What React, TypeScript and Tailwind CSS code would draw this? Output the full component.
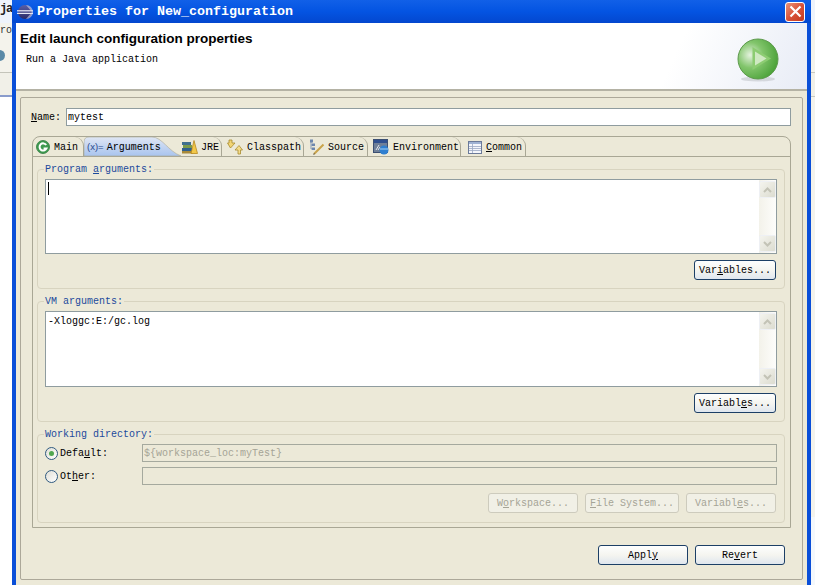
import React from 'react'

const mono = "font-['Liberation_Mono','DejaVu_Sans_Mono',monospace]"

const Scrollbar = () => (
  <div className="flex w-[17px] shrink-0 flex-col justify-between bg-gradient-to-r from-[#f3f2ea] to-[#fdfdfb] py-px">
    <ScrollArrow up />
    <ScrollArrow />
  </div>
)

const ScrollArrow = ({ up = false }: { up?: boolean }) => (
  <div className="flex h-[17px] w-[17px] items-center justify-center rounded-[2px] border border-[#eef0f4] bg-gradient-to-br from-[#f4f4ee] to-[#dcdcd0]">
    <svg width="9" height="6" viewBox="0 0 9 6">
      <path d={up ? 'M1 5 L4.5 1.5 L8 5' : 'M1 1 L4.5 4.5 L8 1'} fill="none" stroke="#c3c3b6" strokeWidth="2" />
    </svg>
  </div>
)

const XpButton = ({ className, children }: { className: string; children: React.ReactNode }) => (
  <button
    type="button"
    className={`flex h-[20px] items-center justify-center rounded-[3px] border border-[#1c3f66] bg-gradient-to-b from-[#fdfefe] via-[#f5f5f0] to-[#dfe6ee] pt-px text-[10px] leading-none text-black ${className}`}
  >
    {children}
  </button>
)

const DisabledButton = ({ className, children }: { className: string; children: React.ReactNode }) => (
  <button
    type="button"
    className={`flex h-[20px] items-center justify-center rounded-[3px] border border-[#cdcbbd] bg-[#f1f0e6] pt-px text-[10px] leading-none text-[#a5a496] ${className}`}
  >
    {children}
  </button>
)

const Group = ({ label, className, children }: { label: React.ReactNode; className: string; children: React.ReactNode }) => (
  <fieldset className={`ml-[4px] mr-[5px] rounded-[4px] border border-[#d8d4c0] px-[7px] ${className}`}>
    <legend className="ml-[-1px] px-[1px] text-[10px] leading-[11px] text-[#1c4a9c]">{label}</legend>
    {children}
  </fieldset>
)

const ArgBox = ({ className, children }: { className: string; children?: React.ReactNode }) => (
  <div className={`flex border border-[#8f9c9f] bg-white ${className}`}>
    <div className="flex-1 px-[2px] pt-[2px] text-[10px] leading-[12px] text-black">{children}</div>
    <Scrollbar />
  </div>
)

const Tab = ({ className, icon, children }: { className: string; icon: React.ReactNode; children: React.ReactNode }) => (
  <div className={`flex h-[19px] items-center rounded-tr-[9px] border-r border-[#a9a795] pt-px text-[10px] text-black ${className}`}>
    {icon}
    {children}
  </div>
)

const EclipseIcon = () => (
  <svg width="16" height="16" viewBox="0 0 16 16" className="shrink-0">
    <defs>
      <linearGradient id="ecl" x1="0" y1="0" x2="0" y2="1">
        <stop offset="0" stopColor="#5a5fa8" />
        <stop offset="1" stopColor="#2c2a66" />
      </linearGradient>
    </defs>
    <circle cx="8" cy="8" r="7" fill="url(#ecl)" />
    <rect x="0" y="6.2" width="16" height="1.2" fill="#e8e8f4" />
    <rect x="0" y="8.8" width="16" height="1.2" fill="#e8e8f4" />
    <path d="M9 1 A7 7 0 0 1 9 15 L15 8 Z" fill="#dcdcec" opacity="0.55" />
  </svg>
)

const PlayBadge = () => (
  <svg width="42" height="46" viewBox="0 0 42 46">
    <defs>
      <radialGradient id="ball" cx="0.3" cy="0.4" r="0.8">
        <stop offset="0" stopColor="#e4f2de" />
        <stop offset="0.4" stopColor="#82c56c" />
        <stop offset="1" stopColor="#3f9a2e" />
      </radialGradient>
    </defs>
    <ellipse cx="21" cy="41" rx="17" ry="2.5" fill="#c9ccd2" opacity="0.7" />
    <circle cx="21" cy="21" r="20" fill="url(#ball)" stroke="#5d9a4c" strokeWidth="1" />
    <path d="M15.5 9 L34 20.5 L15.5 32 Z" fill="#8ccc72" />
    <path d="M18 13.5 L29.5 20.5 L18 27.5 Z" fill="#cfe9c2" />
  </svg>
)

const CloseButton = () => (
  <div className="flex h-[20px] w-[20px] items-center justify-center rounded-[3px] border border-white bg-gradient-to-br from-[#e8927a] via-[#d9533a] to-[#c23a1e]">
    <svg width="13" height="13" viewBox="0 0 13 13">
      <path d="M1.5 1.5 L11.5 11.5 M11.5 1.5 L1.5 11.5" stroke="#fff" strokeWidth="2.2" />
    </svg>
  </div>
)

const MainIcon = () => (
  <svg width="14" height="14" viewBox="0 0 14 14" className="mr-[4px] ml-[3px] shrink-0">
    <circle cx="7" cy="7" r="6.5" fill="#3f9a50" stroke="#2f7b40" strokeWidth="0.8" />
    <path d="M10.2 5 A3.6 3.6 0 1 0 10.4 8.6 L7.6 8.6" fill="none" stroke="#fff" strokeWidth="2" />
  </svg>
)

const JreIcon = () => (
  <svg width="16" height="14" viewBox="0 0 16 14" className="mr-[3px] shrink-0">
    <rect x="0" y="2" width="9" height="3" fill="#3f6f8f" />
    <rect x="1" y="5" width="9" height="3" fill="#7a9a4a" />
    <rect x="0" y="8" width="10" height="3" fill="#2f5f8f" />
    <rect x="0" y="11" width="11" height="2.5" fill="#a88a3a" />
    <path d="M12 0.5 L15.5 13.5 L9 13.5 Z" fill="#f2c84a" stroke="#b98a1e" strokeWidth="0.8" />
  </svg>
)

const ClasspathIcon = () => (
  <svg width="16" height="16" viewBox="0 0 16 16" className="mr-[4px] ml-[5px] shrink-0">
    <path d="M2 1 L5 1 L5 4 L8 4 L3.5 9 L0.5 4 L2 4 Z" fill="#f2d575" stroke="#a98b2d" strokeWidth="0.8" />
    <path d="M11 15 L11 11 L8 11 L12 6.5 L15.5 11 L13.5 11 L13.5 15 Z" fill="#f4dc8b" stroke="#a98b2d" strokeWidth="0.8" />
  </svg>
)

const SourceIcon = () => (
  <svg width="16" height="16" viewBox="0 0 16 16" className="mr-[3px] ml-[5px] shrink-0">
    <rect x="1" y="0.5" width="3" height="3" fill="#6d87ad" />
    <rect x="3" y="4.5" width="3" height="2.5" fill="#6d87ad" />
    <rect x="3" y="8.5" width="3" height="2.5" fill="#6d87ad" />
    <path d="M2 3 L2 10 L3 10 M2 6 L3 6" stroke="#6d87ad" strokeWidth="0.8" fill="none" />
    <path d="M5 15 L14.5 5.5" stroke="#c9a24a" strokeWidth="2" />
    <path d="M4 16 L6 15 L5 14 Z" fill="#555" />
  </svg>
)

const EnvironmentIcon = () => (
  <svg width="16" height="16" viewBox="0 0 16 16" className="mr-[4px] ml-[5px] shrink-0">
    <rect x="0.5" y="0.5" width="14" height="13" fill="#6f7f98" stroke="#3c4f72" strokeWidth="1" />
    <rect x="1" y="1" width="13" height="3" fill="#2f4f8f" />
    <path d="M3 11 L6 6 M5 11 L7 8" stroke="#e4e8ee" strokeWidth="1" />
    <circle cx="11" cy="11" r="4.5" fill="#2f7fd0" />
    <path d="M7 10 L15 10" stroke="#a7d1f3" strokeWidth="1" />
  </svg>
)

const CommonIcon = () => (
  <svg width="14" height="13" viewBox="0 0 14 13" className="mr-[4px] ml-[7px] shrink-0">
    <rect x="0.5" y="0.5" width="13" height="12" fill="#f4f6fb" stroke="#6b7a99" />
    <rect x="1" y="1" width="12" height="2" fill="#9fb2d3" />
    <path d="M1 5.5 H13 M1 7.5 H13 M1 9.5 H13 M4.5 3 V12" stroke="#9aa8c4" strokeWidth="0.8" />
  </svg>
)

const RadioDot = ({ checked }: { checked?: boolean }) => (
  <div className="flex h-[13px] w-[13px] shrink-0 items-center justify-center rounded-full border border-[#2f5a80] bg-gradient-to-br from-[#e0dfd6] to-white">
    {checked && <div className="h-[5px] w-[5px] rounded-full bg-[#4fa64f]" />}
  </div>
)

export default function App() {
  return (
    <div className={`flex h-[585px] w-[815px] overflow-hidden bg-white ${mono}`}>
      <div className="flex w-[12px] shrink-0 flex-col overflow-hidden text-black">
        <div className="h-[23px] bg-[#eef3fb] pt-[1px] text-[12px] font-bold leading-[16px] tracking-[-1.2px] text-[#222]">ja</div>
        <div className="flex h-[50px] flex-col border-b border-[#c4c4ba] bg-[#f4f3ec] pt-[2px]">
          <span className="text-[10px] leading-[12px] text-[#333]">ro</span>
          <div className="mt-[13px] ml-[-6px] h-[11px] w-[11px] rounded-full bg-[#5a8aa8]" />
        </div>
        <div className="h-[24px] border-b-2 border-[#8a9ccc] bg-[#f1f0e8]" />
        <div className="flex-1 bg-white" />
      </div>

      <div className="flex w-[799px] shrink-0 flex-col bg-[#0a4fd8]">
        <div className="flex h-[23px] shrink-0 items-center bg-gradient-to-b from-[#1160e8] via-[#0454e2] to-[#0347cf] pl-[5px] pr-[6px]">
          <EclipseIcon />
          <span className="ml-[4px] text-[13.33px] font-bold leading-none text-white">Properties for New_configuration</span>
          <div className="ml-auto">
            <CloseButton />
          </div>
        </div>
        <div className="mx-[4px] flex flex-1 flex-col bg-[#ece9d8]">
          <div className="flex h-[68px] shrink-0 justify-between border-b-2 border-[#b4b2a4] bg-[linear-gradient(115deg,#ffffff_82%,#e8ecf6_100%)] pl-[4px] pr-[28px]">
            <div>
              <div className="pt-[8px] font-['Liberation_Sans',Arial,sans-serif] text-[13.5px] font-bold leading-[16px] text-black">
                Edit launch configuration properties
              </div>
              <div className="pt-[7px] pl-[6px] text-[10px] leading-[12px] text-black">Run a Java application</div>
            </div>
            <div className="pt-[15px]">
              <PlayBadge />
            </div>
          </div>

          <div className="mx-[4px] mt-[6px] flex h-[483px] flex-col rounded-[2px] border border-[#aca899] pl-[11px] pr-[11px]">
            <div className="flex items-center pt-[10px] text-[10px] text-black">
              <span className="ml-[-1px] w-[35px]">
                <span className="underline">N</span>ame:
              </span>
              <div className="flex h-[18px] w-[725px] items-center border border-[#8f9c9f] bg-white pl-[1px] pt-px">mytest</div>
            </div>

            <div className="mt-[10px] flex h-[392px] flex-col rounded-t-[8px] border border-[#a9a795]">
              <div className="flex shrink-0 border-b border-[#a9a795]">
                <Tab className="w-[51px]" icon={<MainIcon />}>
                  Main
                </Tab>
                <div className="relative flex h-[19px] w-[98px] items-center pt-px text-[10px] text-black">
                  <svg width="98" height="19" viewBox="0 0 98 19" className="absolute inset-0" preserveAspectRatio="none">
                    <defs>
                      <linearGradient id="sel" x1="0" y1="0" x2="0" y2="1">
                        <stop offset="0" stopColor="#dfe6f4" />
                        <stop offset="1" stopColor="#a9c4ee" />
                      </linearGradient>
                    </defs>
                    <path d="M0 19 L0 5 Q0 0 5 0 L68 0 C78 0 84 14 97 19 Z" fill="url(#sel)" stroke="#a9a795" strokeWidth="0.6" />
                  </svg>
                  <span className="relative ml-[3px] mr-[3px] font-['Liberation_Sans',sans-serif] text-[9.5px] text-[#2b4a8c]">(x)=</span>
                  <span className="relative">Arguments</span>
                </div>
                <Tab className="w-[40px]" icon={<JreIcon />}>
                  JRE
                </Tab>
                <Tab className="w-[82px]" icon={<ClasspathIcon />}>
                  Classpath
                </Tab>
                <Tab className="w-[64px]" icon={<SourceIcon />}>
                  Source
                </Tab>
                <Tab className="w-[93px]" icon={<EnvironmentIcon />}>
                  Environment
                </Tab>
                <Tab className="w-[65px]" icon={<CommonIcon />}>
                  <span>
                    <span className="underline">C</span>ommon
                  </span>
                </Tab>
              </div>

              <div className="flex flex-col pt-[7px]">
                <Group
                  className="h-[125px]"
                  label={
                    <>
                      Program <span className="underline">a</span>rguments:
                    </>
                  }
                >
                  <ArgBox className="mt-[4px] h-[75px]">
                    <div className="h-[13px] w-px bg-black" />
                  </ArgBox>
                  <div className="mt-[6px] mr-px flex justify-end">
                    <XpButton className="w-[82px]">
                      <span>
                        Var<span className="underline">i</span>ables...
                      </span>
                    </XpButton>
                  </div>
                </Group>

                <Group className="mt-[7px] h-[126px]" label="VM arguments:">
                  <ArgBox className="mt-[4px] h-[76px]">
                    <div className="pt-[2px]">-Xloggc:E:/gc.log</div>
                  </ArgBox>
                  <div className="mt-[6px] mr-px flex justify-end">
                    <XpButton className="w-[82px]">
                      <span>
                        Variabl<span className="underline">e</span>s...
                      </span>
                    </XpButton>
                  </div>
                </Group>

                <Group className="mt-[7px] h-[94px]" label="Working directory:">
                  <div className="mt-[4px] flex h-[18px] items-center text-[10px] text-black">
                    <RadioDot checked />
                    <span className="ml-[2px] w-[82px]">
                      Defa<span className="underline">u</span>lt:
                    </span>
                    <div className="flex h-[18px] flex-1 items-center border border-[#a5a99e] bg-[#ece9d8] pl-[1px] text-[#a5a496]">
                      {'${workspace_loc:myTest}'}
                    </div>
                  </div>
                  <div className="mt-[5px] flex h-[18px] items-center text-[10px] text-black">
                    <RadioDot />
                    <span className="ml-[2px] w-[82px]">
                      Ot<span className="underline">h</span>er:
                    </span>
                    <div className="h-[18px] flex-1 border border-[#a5a99e] bg-[#ece9d8]" />
                  </div>
                  <div className="mt-[8px] mr-px flex justify-end gap-[7px]">
                    <DisabledButton className="w-[90px]">
                      <span>
                        W<span className="underline">o</span>rkspace...
                      </span>
                    </DisabledButton>
                    <DisabledButton className="w-[94px]">
                      <span>
                        <span className="underline">F</span>ile System...
                      </span>
                    </DisabledButton>
                    <DisabledButton className="w-[90px]">
                      <span>
                        Variabl<span className="underline">e</span>s...
                      </span>
                    </DisabledButton>
                  </div>
                </Group>
              </div>
            </div>

            <div className="mt-[17px] flex justify-end gap-[7px] pr-[6px]">
              <XpButton className="w-[90px]">
                <span>
                  Appl<span className="underline">y</span>
                </span>
              </XpButton>
              <XpButton className="w-[90px]">
                <span>
                  Re<span className="underline">v</span>ert
                </span>
              </XpButton>
            </div>
          </div>
        </div>
      </div>

      <div className="flex flex-1 flex-col">
        <div className="h-[23px] bg-[#eef3fb]" />
        <div className="h-[50px] border-b border-[#c8c8c0] bg-[#f4f3ec]" />
        <div className="h-[24px] border-b border-[#c8c8c0] bg-[#f1f0e8]" />
        <div className="h-[420px] bg-[#f4f3ec]" />
        <div className="flex-1 bg-[#f4f8fc]" />
      </div>
    </div>
  )
}
